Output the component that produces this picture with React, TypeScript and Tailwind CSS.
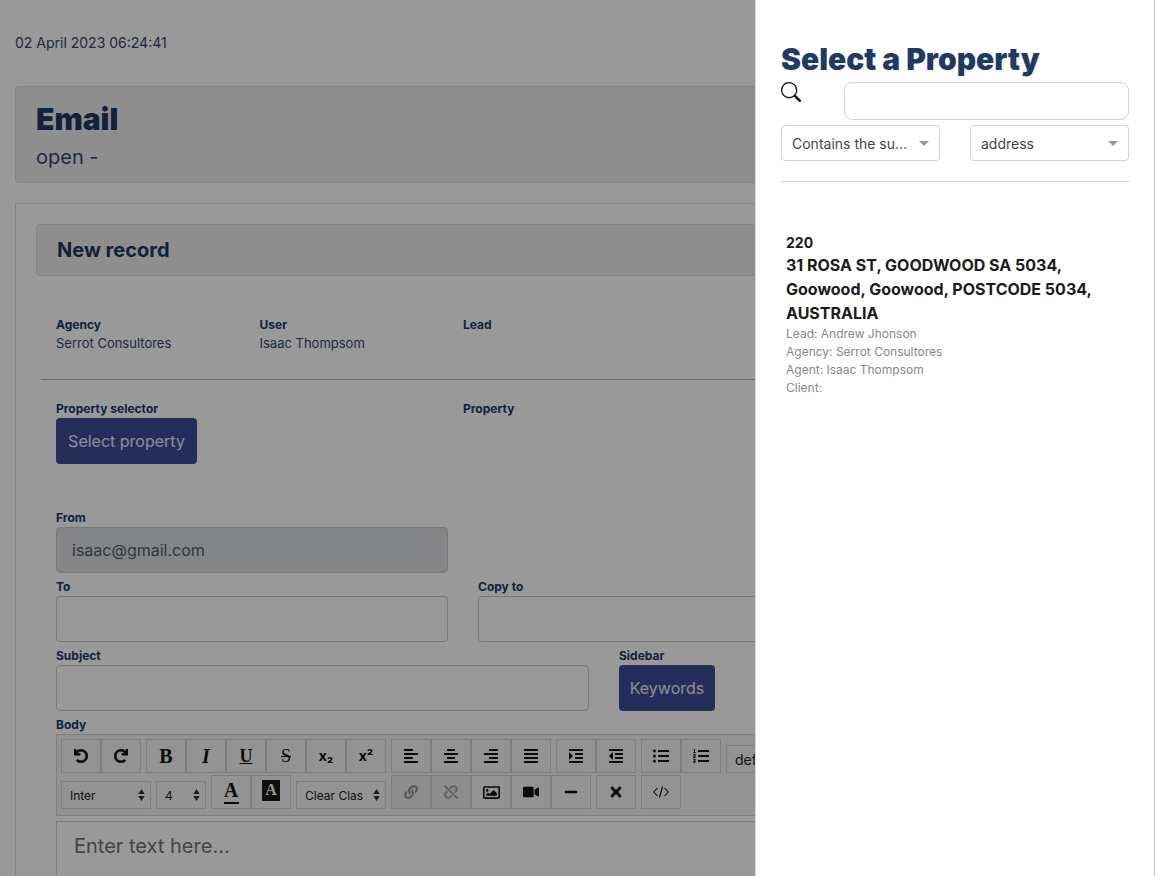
import { BsSearch } from "react-icons/bs";
import {
  FaAlignCenter,
  FaAlignJustify,
  FaAlignLeft,
  FaAlignRight,
  FaIndent,
  FaLink,
  FaListOl,
  FaListUl,
  FaMinus,
  FaOutdent,
  FaRedo,
  FaRegImage,
  FaTimes,
  FaUndo,
  FaUnlink,
  FaVideo,
} from "react-icons/fa";
import type { ReactNode } from "react";

function Label({ children }: { children: ReactNode }) {
  return <p className="text-xs font-bold leading-[18px] text-[#1f3a63]">{children}</p>;
}

function Btn({ children, off }: { children: ReactNode; off?: boolean }) {
  return (
    <button className={`w-10 h-[34px] flex items-center justify-center border border-[#d4d4d4] text-[#111] ${off ? "bg-[#ececec]" : "bg-[#f5f5f5]"}`}>
      {children}
    </button>
  );
}

function Sel({ label, w, big }: { label: string; w: string; big?: boolean }) {
  return (
    <div className={`${w} h-7 flex items-center justify-between pl-[8px] pr-[5px] border border-[#d4d4d4] bg-[#f5f5f5] text-[#222] ${big ? "text-sm" : "text-xs"}`}>
      <span className="pt-px whitespace-nowrap overflow-hidden">{label}</span>
      <svg width="7" height="12" viewBox="0 0 7 12" className="shrink-0">
        <path d="M3.5 0l3.2 5H.3zM3.5 12L.3 7h6.4z" fill="#333" />
      </svg>
    </div>
  );
}

export default function App() {
  return (
    <div className="relative h-screen overflow-hidden bg-white font-['Inter',sans-serif] text-[#34466b]">
      <div className="w-[1125px] mx-[15px]">
        <p className="pt-[33px] text-sm leading-[20px]">02 April 2023 06:24:41</p>
        <div className="mt-[33px] h-[97px] rounded border border-[#dcdcdc] bg-[#ededed] px-5 pt-[14px]">
          <h1 className="text-3xl font-black leading-[36px] text-[#1f3a63]">Email</h1>
          <p className="mt-[5px] text-xl leading-[30px]">open -</p>
        </div>
        <div className="mt-[20px] h-[800px] border border-[#dcdcdc] px-5 pt-5">
          <div className="h-[52px] rounded border border-[#dcdcdc] bg-[#ededed] px-5 flex items-center">
            <h2 className="text-xl font-bold text-[#1f3a63]">New record</h2>
          </div>
          <div className="mt-[40px] pl-5 grid grid-cols-[203.5px_203.5px_203.5px] text-[13px]">
            <div><Label>Agency</Label><p className="leading-[19px]">Serrot Consultores</p></div>
            <div><Label>User</Label><p className="leading-[19px]">Isaac Thompsom</p></div>
            <div><Label>Lead</Label></div>
          </div>
          <div className="mt-[26px] ml-[5px] border-t border-[#bdbdbd]" />
          <div className="mt-[20px] pl-5 grid grid-cols-[407px_203px]">
            <div>
              <Label>Property selector</Label>
              <button className="h-[46px] w-[141px] rounded bg-[#3e4b98] text-base text-white/90">Select property</button>
            </div>
            <div><Label>Property</Label></div>
          </div>
          <div className="mt-[45px] pl-5">
            <Label>From</Label>
            <div className="h-[46px] w-[392px] rounded border border-[#ccc] bg-[#dcdee2] pl-[15px] flex items-center text-base text-[#545b63]">isaac@gmail.com</div>
          </div>
          <div className="mt-[5px] pl-5 flex gap-[30px]">
            <div><Label>To</Label><div className="h-[46px] w-[392px] rounded border border-[#ccc] bg-white" /></div>
            <div><Label>Copy to</Label><div className="h-[46px] w-[392px] rounded border border-[#ccc] bg-white" /></div>
          </div>
          <div className="mt-[5px] pl-5 flex gap-[30px]">
            <div><Label>Subject</Label><div className="h-[46px] w-[533px] rounded border border-[#ccc] bg-white" /></div>
            <div><Label>Sidebar</Label><button className="h-[46px] w-[96px] rounded bg-[#3e4b98] text-base text-white/90">Keywords</button></div>
          </div>
          <div className="mt-[5px] pl-5">
            <Label>Body</Label>
            <div className="w-[900px] h-[82px] border border-[#d4d4d4] bg-[#f5f5f5] pl-1 pt-1">
              <div className="flex gap-[5px] h-[34px] items-end">
                <div className="flex">
                  <Btn><FaUndo size={14} stroke="currentColor" strokeWidth={24} /></Btn>
                  <Btn><FaRedo size={14} stroke="currentColor" strokeWidth={24} /></Btn>
                </div>
                <div className="flex">
                  <Btn><span className="font-['Liberation_Serif'] text-xl font-bold">B</span></Btn>
                  <Btn><span className="font-['Liberation_Serif'] text-xl font-bold italic">I</span></Btn>
                  <Btn><span className="font-['Liberation_Serif'] text-lg font-bold underline">U</span></Btn>
                  <Btn><span className="font-['Liberation_Serif'] text-lg line-through">S</span></Btn>
                  <Btn><span className="text-sm font-bold">x₂</span></Btn>
                  <Btn><span className="text-sm font-bold">x²</span></Btn>
                </div>
                <div className="flex">
                  <Btn><FaAlignLeft size={16} /></Btn>
                  <Btn><FaAlignCenter size={16} /></Btn>
                  <Btn><FaAlignRight size={16} /></Btn>
                  <Btn><FaAlignJustify size={16} /></Btn>
                </div>
                <div className="flex">
                  <Btn><FaIndent size={16} /></Btn>
                  <Btn><FaOutdent size={16} /></Btn>
                </div>
                <div className="flex">
                  <Btn><FaListUl size={16} /></Btn>
                  <Btn><FaListOl size={16} /></Btn>
                </div>
                <Sel label="default" w="w-[90px]" big />
              </div>
              <div className="mt-0.5 flex gap-[5px] h-[34px] items-end">
                <Sel label="Inter" w="w-[90px]" />
                <Sel label="4" w="w-[50px]" />
                <div className="flex">
                  <Btn>
                    <span className="flex flex-col items-center">
                      <span className="font-['Liberation_Serif'] text-xl leading-[18px] font-bold">A</span>
                      <span className="mt-[3px] h-0.5 w-[15px] bg-[#111]" />
                    </span>
                  </Btn>
                  <Btn>
                    <span className="-mt-1 w-[18px] h-[21px] flex items-center justify-center bg-[#191919] font-['Liberation_Serif'] text-base font-bold text-white">A</span>
                  </Btn>
                </div>
                <Sel label="Clear Clas" w="w-[90px]" />
                <div className="flex">
                  <Btn off><FaLink size={14} className="opacity-40" /></Btn>
                  <Btn off><FaUnlink size={14} className="opacity-30" /></Btn>
                  <Btn><FaRegImage size={17} /></Btn>
                  <Btn><FaVideo size={16} /></Btn>
                  <Btn><FaMinus size={14} /></Btn>
                </div>
                <Btn><FaTimes size={16} /></Btn>
                <Btn>
                  <svg width="16" height="12" viewBox="0 0 16 12" fill="none" stroke="#111" strokeWidth="1.1">
                    <path d="M4.5 2L.8 6l3.7 4M11.5 2l3.7 4-3.7 4M9.5.5l-3 11" />
                  </svg>
                </Btn>
              </div>
            </div>
            <div className="mt-[5px] w-[900px] h-[120px] border border-[#d4d4d4] px-[17px] py-[10px] text-xl text-[#6c757d]">Enter text here...</div>
          </div>
        </div>
      </div>
      <div className="absolute inset-0 bg-black/40" />
      <div className="absolute top-0 right-0 bottom-0 w-[400px] bg-white border-l border-r border-l-[#d8d8d8] border-r-[#c8c8c8] px-[25px] text-[#212529]">
        <h2 className="mt-[41px] text-3xl font-black leading-[36px] text-[#1f3a63]">Select a Property</h2>
        <div className="mt-[5px] flex justify-between">
          <BsSearch size={20} className="text-[#111]" />
          <div className="h-[38px] w-[285px] rounded-lg border border-[#ced4da]" />
        </div>
        <div className="mt-[5px] flex justify-between text-sm text-[#3f444a]">
          <div className="w-[159px] h-[36px] rounded border border-[#ced4da] pl-[10px] pr-[10px] flex items-center justify-between">
            <span className="pt-px">Contains the su...</span>
            <span className="border-x-[5px] border-t-[5px] border-x-transparent border-t-[#999]" />
          </div>
          <div className="w-[159px] h-[36px] rounded border border-[#ced4da] pl-[10px] pr-[10px] flex items-center justify-between">
            <span className="pt-px">address</span>
            <span className="border-x-[5px] border-t-[5px] border-x-transparent border-t-[#999]" />
          </div>
        </div>
        <div className="mt-5 border-t border-[#ced4da]" />
        <div className="mt-[50px] pl-[5px]">
          <p className="text-sm font-bold leading-[21px] text-[#1b1b1b]">220</p>
          <p className="text-base font-bold leading-[24px] text-[#1b1b1b]">31 ROSA ST, GOODWOOD SA 5034, Goowood, Goowood, POSTCODE 5034, AUSTRALIA</p>
          <div className="text-xs leading-[18px] text-[#888]">
            <p>Lead: Andrew Jhonson</p>
            <p>Agency: Serrot Consultores</p>
            <p>Agent: Isaac Thompsom</p>
            <p>Client:</p>
          </div>
        </div>
      </div>
    </div>
  );
}
